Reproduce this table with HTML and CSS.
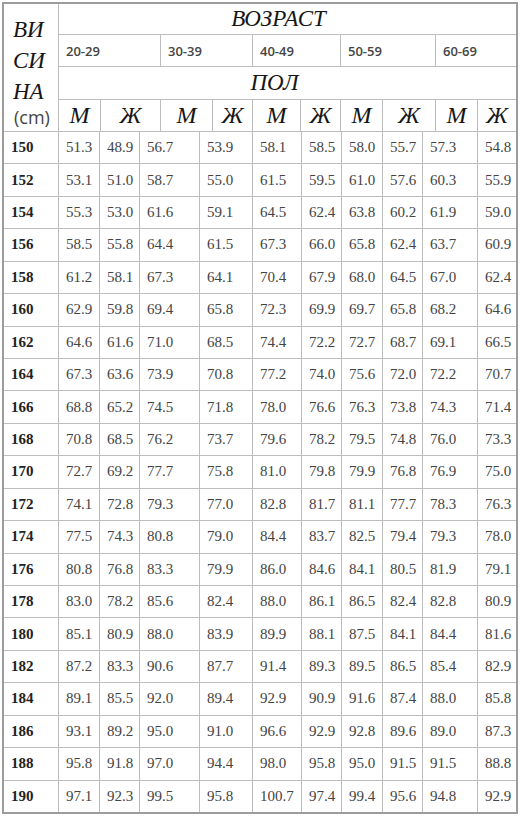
FILE: index.html
```html
<!DOCTYPE html>
<html lang="ru">
<head>
<meta charset="utf-8">
<title>Вес по росту и возрасту</title>
<link rel="stylesheet" href="styles.css">
</head>
<body>
<div class="sheet">
  <div class="head">
    <div class="h-height">
      <span class="hl">ВИ</span>
      <span class="hl">СИ</span>
      <span class="hl">НА</span>
      <span class="cm">(cm)</span>
    </div>
    <div class="h-title h-age">ВОЗРАСТ</div>
    <div class="h-range">20-29</div>
    <div class="h-range">30-39</div>
    <div class="h-range">40-49</div>
    <div class="h-range">50-59</div>
    <div class="h-range">60-69</div>
    <div class="h-title h-sex">ПОЛ</div>
    <div class="h-mf">М</div><div class="h-mf">Ж</div>
    <div class="h-mf">М</div><div class="h-mf">Ж</div>
    <div class="h-mf">М</div><div class="h-mf">Ж</div>
    <div class="h-mf">М</div><div class="h-mf">Ж</div>
    <div class="h-mf">М</div><div class="h-mf">Ж</div>
  </div>
  <div class="body" id="body"></div>
</div>
<script src="script.js"></script>
</body>
</html>
```

FILE: script.js
```js
var rows = [
  [150, "51.3","48.9","56.7","53.9","58.1","58.5","58.0","55.7","57.3","54.8"],
  [152, "53.1","51.0","58.7","55.0","61.5","59.5","61.0","57.6","60.3","55.9"],
  [154, "55.3","53.0","61.6","59.1","64.5","62.4","63.8","60.2","61.9","59.0"],
  [156, "58.5","55.8","64.4","61.5","67.3","66.0","65.8","62.4","63.7","60.9"],
  [158, "61.2","58.1","67.3","64.1","70.4","67.9","68.0","64.5","67.0","62.4"],
  [160, "62.9","59.8","69.4","65.8","72.3","69.9","69.7","65.8","68.2","64.6"],
  [162, "64.6","61.6","71.0","68.5","74.4","72.2","72.7","68.7","69.1","66.5"],
  [164, "67.3","63.6","73.9","70.8","77.2","74.0","75.6","72.0","72.2","70.7"],
  [166, "68.8","65.2","74.5","71.8","78.0","76.6","76.3","73.8","74.3","71.4"],
  [168, "70.8","68.5","76.2","73.7","79.6","78.2","79.5","74.8","76.0","73.3"],
  [170, "72.7","69.2","77.7","75.8","81.0","79.8","79.9","76.8","76.9","75.0"],
  [172, "74.1","72.8","79.3","77.0","82.8","81.7","81.1","77.7","78.3","76.3"],
  [174, "77.5","74.3","80.8","79.0","84.4","83.7","82.5","79.4","79.3","78.0"],
  [176, "80.8","76.8","83.3","79.9","86.0","84.6","84.1","80.5","81.9","79.1"],
  [178, "83.0","78.2","85.6","82.4","88.0","86.1","86.5","82.4","82.8","80.9"],
  [180, "85.1","80.9","88.0","83.9","89.9","88.1","87.5","84.1","84.4","81.6"],
  [182, "87.2","83.3","90.6","87.7","91.4","89.3","89.5","86.5","85.4","82.9"],
  [184, "89.1","85.5","92.0","89.4","92.9","90.9","91.6","87.4","88.0","85.8"],
  [186, "93.1","89.2","95.0","91.0","96.6","92.9","92.8","89.6","89.0","87.3"],
  [188, "95.8","91.8","97.0","94.4","98.0","95.8","95.0","91.5","91.5","88.8"],
  [190, "97.1","92.3","99.5","95.8","100.7","97.4","99.4","95.6","94.8","92.9"]
];
var body = document.getElementById("body");
rows.forEach(function (r) {
  r.forEach(function (v, i) {
    var c = document.createElement("div");
    c.className = i === 0 ? "c-h" : "c-v";
    c.textContent = v;
    body.appendChild(c);
  });
});
```

FILE: styles.css
```css
html, body {
  margin: 0;
  padding: 0;
  background: #ffffff;
}

.sheet {
  margin: 2px 0 0 2px;
  width: 512px;
  border: 2px solid #9c9c9c;
  background: #bdbdbd;
  display: flex;
  flex-direction: column;
  gap: 1px;
}

.head {
  display: grid;
  grid-template-columns: 54px 41px 59px 51px 39px 47px 39px 41px 52px 41px 38px;
  grid-template-rows: 30px 31px 32px 31px;
  gap: 1px;
}

.head > div {
  background: #ffffff;
}

.h-height {
  grid-row: 1 / 5;
  grid-column: 1;
  display: flex;
  flex-direction: column;
  padding: 10px 0 0 9px;
}

.hl {
  font-family: "Liberation Serif", serif;
  font-style: italic;
  font-size: 23px;
  line-height: 31px;
  color: #161616;
}

.cm {
  font-family: "Open Sans", sans-serif;
  font-size: 18px;
  line-height: 20px;
  color: #444444;
  padding-left: 1px;
}

.h-title {
  grid-column: 2 / 12;
  font-family: "Liberation Serif", serif;
  font-style: italic;
  font-size: 23px;
  color: #161616;
  display: flex;
  align-items: center;
  justify-content: center;
}

.h-age {
  padding-right: 18px;
}

.h-sex {
  padding-right: 26px;
}

.h-range {
  grid-column: span 2;
  font-family: "Open Sans", sans-serif;
  font-weight: 600;
  font-size: 13px;
  color: #444444;
  display: flex;
  align-items: center;
  padding-left: 7px;
}

.h-mf {
  font-family: "Liberation Serif", serif;
  font-style: italic;
  font-size: 24px;
  color: #161616;
  display: flex;
  align-items: center;
  justify-content: center;
}

.body {
  display: grid;
  grid-template-columns: 54px 40px 39px 59px 52px 48px 39px 40px 39px 54px 38px;
  grid-template-rows: repeat(21, 1fr);
  height: 680px;
  gap: 1px;
}

.body > div {
  background: #ffffff;
  display: flex;
  align-items: center;
  white-space: nowrap;
  overflow: hidden;
}

.c-h {
  font-family: "Liberation Serif", serif;
  font-weight: 700;
  font-size: 15px;
  color: #222222;
  padding-left: 7px;
}

.c-v {
  font-family: "Liberation Serif", serif;
  font-size: 15px;
  color: #444444;
  padding-left: 7px;
}
```
